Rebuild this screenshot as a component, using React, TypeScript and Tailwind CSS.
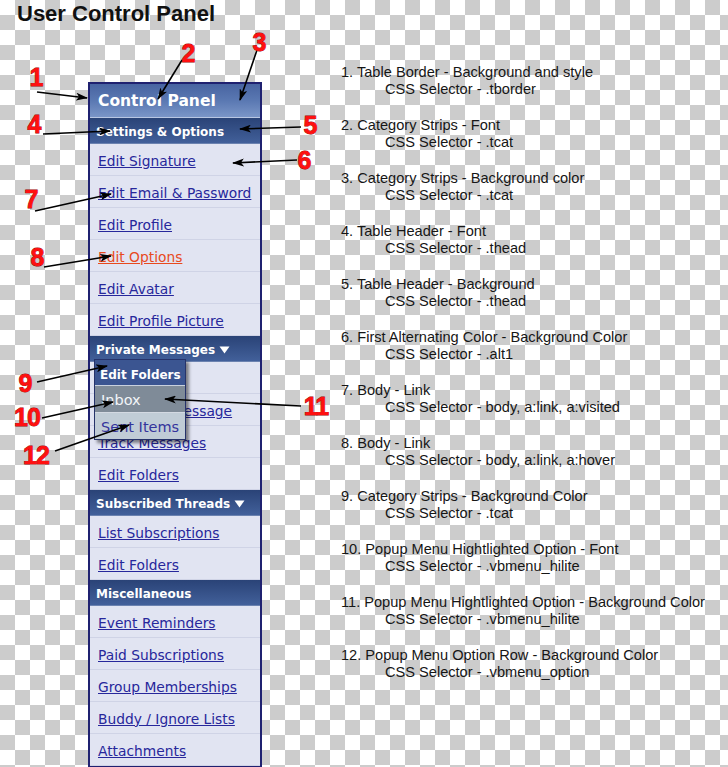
import React from "react";

type Section = {
  title: string;
  menu?: boolean;
  items: { label: string; hover?: boolean }[];
};

const sections: Section[] = [
  {
    title: "Settings & Options",
    items: [
      { label: "Edit Signature" },
      { label: "Edit Email & Password" },
      { label: "Edit Profile" },
      { label: "Edit Options", hover: true },
      { label: "Edit Avatar" },
      { label: "Edit Profile Picture" },
    ],
  },
  {
    title: "Private Messages",
    menu: true,
    items: [
      { label: "Inbox" },
      { label: "Send New Message" },
      { label: "Track Messages" },
      { label: "Edit Folders" },
    ],
  },
  {
    title: "Subscribed Threads",
    menu: true,
    items: [{ label: "List Subscriptions" }, { label: "Edit Folders" }],
  },
  {
    title: "Miscellaneous",
    items: [
      { label: "Event Reminders" },
      { label: "Paid Subscriptions" },
      { label: "Group Memberships" },
      { label: "Buddy / Ignore Lists" },
      { label: "Attachments" },
    ],
  },
];

const notes: [string, string][] = [
  ["1. Table Border - Background and style", "CSS Selector - .tborder"],
  ["2. Category Strips - Font", "CSS Selector - .tcat"],
  ["3. Category Strips - Background color", "CSS Selector - .tcat"],
  ["4. Table Header - Font", "CSS Selector - .thead"],
  ["5. Table Header - Background", "CSS Selector - .thead"],
  ["6. First Alternating Color - Background Color", "CSS Selector - .alt1"],
  ["7. Body - Link", "CSS Selector - body, a:link, a:visited"],
  ["8. Body - Link", "CSS Selector - body, a:link, a:hover"],
  ["9. Category Strips - Background Color", "CSS Selector - .tcat"],
  ["10. Popup Menu Hightlighted Option - Font", "CSS Selector -  .vbmenu_hilite"],
  ["11. Popup Menu Hightlighted Option - Background Color", "CSS Selector - .vbmenu_hilite"],
  ["12. Popup Menu Option Row - Background Color", "CSS Selector - .vbmenu_option"],
];

// callout number: label position + arrow from -> to
const callouts: { n: string; x: number; y: number; from: [number, number]; to: [number, number] }[] = [
  { n: "1", x: 36, y: 77, from: [37, 92], to: [87, 98] },
  { n: "2", x: 188, y: 53, from: [182, 60], to: [158, 99] },
  { n: "3", x: 259, y: 42, from: [257, 50], to: [240, 100] },
  { n: "4", x: 34, y: 124, from: [43, 134], to: [110, 131] },
  { n: "5", x: 310, y: 125, from: [301, 127], to: [240, 129] },
  { n: "6", x: 304, y: 160, from: [297, 160], to: [233, 163] },
  { n: "7", x: 31, y: 199, from: [35, 211], to: [111, 194] },
  { n: "8", x: 37, y: 257, from: [44, 267], to: [111, 256] },
  { n: "9", x: 25, y: 383, from: [37, 382], to: [107, 366] },
  { n: "10", x: 27, y: 417, from: [42, 418], to: [113, 402] },
  { n: "11", x: 316, y: 406, from: [301, 406], to: [165, 399] },
  { n: "12", x: 36, y: 455, from: [55, 451], to: [129, 425] },
];

function DownTriangle() {
  return (
    <svg width="11" height="8" viewBox="0 0 11 8" className="ml-[4px] shrink-0" aria-hidden>
      <path d="M0.5 0.5 H10.5 L5.5 7.5 Z" fill="#ffffff" />
    </svg>
  );
}

function ControlPanel() {
  return (
    <div className="relative w-[174px] shrink-0 border-2 border-[#1f2170] bg-[#e1e4f2] font-[family-name:DejaVu_Sans,Verdana,sans-serif]">
      <div className="flex h-[34px] items-center border-b border-[#b8c6e2] bg-linear-to-b from-[#4864a1] via-[#5a78b2] to-[#7a95c7] pl-[8px] pt-[2px] text-[15.5px] font-bold text-white">
        Control Panel
      </div>
      {sections.map((s, i) => (
        <div key={i}>
          <div className="flex h-[26px] items-center border-b border-[#6b82b0] bg-linear-to-b from-[#2a4377] to-[#42609a] pl-[6px] pt-[3px] text-[12px] font-bold text-white">
            {s.title}
            {s.menu && <DownTriangle />}
          </div>
          {s.items.map((it, j) => (
            <div
              key={j}
              className="flex h-[32px] items-center border-b border-[#cfd3e6] pl-[8px] pt-[3px] text-[13.8px]"
            >
              <span className={it.hover ? "text-[#e84a1e] underline" : "text-[#27279b] underline"}>
                {it.label}
              </span>
            </div>
          ))}
        </div>
      ))}

      {/* popup menu under "Private Messages" */}
      <div className="absolute left-[4px] top-[275px] w-[92px] border border-[#26336a] bg-[#d9dee6] shadow-[3px_3px_3px_rgba(0,0,0,0.45)]">
        <div className="flex h-[26px] items-center border-b border-[#c9d1de] bg-[#3b5591] pl-[5px] pt-[4px] text-[12px] font-bold text-white">
          Edit Folders
        </div>
        <div className="flex h-[27px] items-center border-b border-[#d3d9e2] bg-[#7f8b98] pl-[6px] pt-[4px] text-[14.5px] text-[#f2f5f8]">
          Inbox
        </div>
        <div className="flex h-[26px] items-center bg-[#c0ccd6] pl-[6px] pt-[3px] text-[14.5px] text-[#34349c]">
          Sent Items
        </div>
      </div>
    </div>
  );
}

export default function App() {
  return (
    <div className="relative h-[767px] w-[728px] overflow-hidden bg-[conic-gradient(#cccccc_25%,#ffffff_0_50%,#cccccc_0_75%,#ffffff_0)] bg-[length:30px_30px] font-[family-name:Liberation_Sans,Arial,sans-serif]">
      <h1 className="pl-[17px] pt-[1px] text-[22px] font-bold leading-[26px] text-[#111111]">
        User Control Panel
      </h1>

      <div className="mt-[36px] flex">
        <div className="ml-[88px] mt-[19px]">
          <ControlPanel />
        </div>

        <ol className="ml-[79px] mt-[1px] flex flex-col gap-[19px] text-[14.6px] leading-[17px] text-[#161616]">
          {notes.map(([a, b], i) => (
            <li key={i}>
              <div>{a}</div>
              <div className="pl-[44px]">{b}</div>
            </li>
          ))}
        </ol>
      </div>

      {/* callout arrows and numbers */}
      <svg className="pointer-events-none absolute inset-0" width="728" height="767" aria-hidden>
        <defs>
          <marker id="head" viewBox="0 0 12 8" refX="11" refY="4" markerWidth="12" markerHeight="8" markerUnits="userSpaceOnUse" orient="auto">
            <path d="M0 0 L12 4 L0 8 L3 4 Z" fill="#000000" />
          </marker>
        </defs>
        {callouts.map((c) => (
          <line
            key={"l" + c.n}
            x1={c.from[0]}
            y1={c.from[1]}
            x2={c.to[0]}
            y2={c.to[1]}
            stroke="#000000"
            strokeWidth="1.6"
            markerEnd="url(#head)"
          />
        ))}
        {callouts.map((c) => (
          <text
            key={"t" + c.n}
            x={c.x}
            y={c.y + 9}
            textAnchor="middle"
            fontFamily="Liberation Sans, Arial, sans-serif"
            fontWeight="bold"
            fontSize="25"
            letterSpacing="-1"
            fill="#ff1010"
            stroke="#9a0000"
            strokeWidth="0.8"
            paintOrder="stroke"
          >
            {c.n}
          </text>
        ))}
      </svg>
    </div>
  );
}
